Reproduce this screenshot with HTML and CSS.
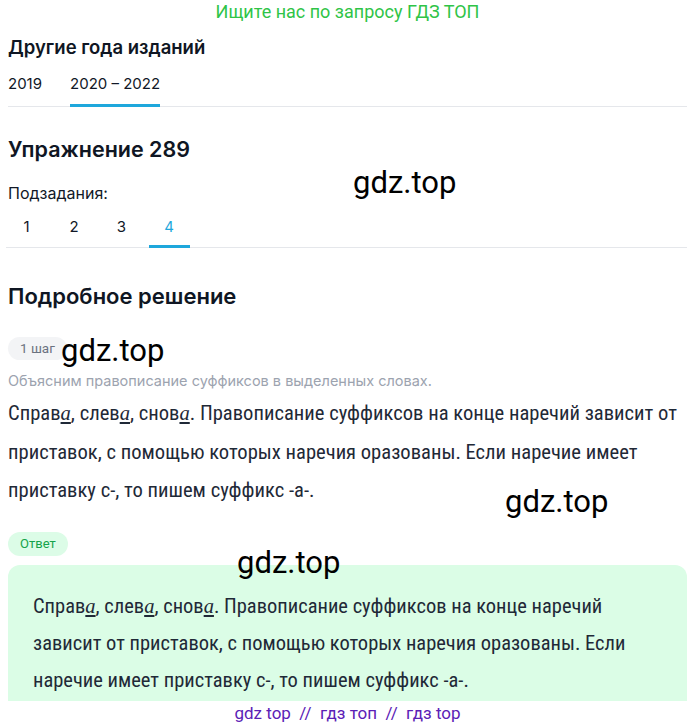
FILE: index.html
```html
<!DOCTYPE html>
<html lang="ru">
<head>
<meta charset="utf-8">
<link rel="stylesheet" href="styles.css">
</head>
<body>
<div class="page">
  <div class="promo">Ищите нас по запросу ГДЗ ТОП</div>
  <h2 class="h-years">Другие года изданий</h2>
  <div class="tabs years">
    <span class="tab">2019</span>
    <span class="tab active">2020 – 2022</span>
  </div>
  <h1 class="h-ex">Упражнение 289</h1>
  <div class="sub-label">Подзадания:</div>
  <div class="tabs subs">
    <span class="tab num">1</span>
    <span class="tab num">2</span>
    <span class="tab num">3</span>
    <span class="tab num active">4</span>
  </div>
  <h2 class="h-sol">Подробное решение</h2>
  <div class="badge step">1 шаг</div>
  <p class="hint">Объясним правописание суффиксов в выделенных словах.</p>
  <p class="text">Справ<u class="ul">а</u>, слев<u class="ul">а</u>, снов<u class="ul">а</u>. Правописание суффиксов на конце наречий зависит от приставок, с помощью которых наречия оразованы. Если наречие имеет приставку с-, то пишем суффикс -а-.</p>
  <div class="badge answer">Ответ</div>
  <div class="answer-box">
    <p class="text ans">Справ<u class="ul">а</u>, слев<u class="ul">а</u>, снов<u class="ul">а</u>. Правописание суффиксов на конце наречий зависит от приставок, с помощью которых наречия оразованы. Если наречие имеет приставку с-, то пишем суффикс -а-.</p>
  </div>
  <div class="footer">gdz top &nbsp;//&nbsp; гдз топ &nbsp;//&nbsp; гдз top</div>

  <span class="wm wm1">gdz.top</span>
  <span class="wm wm2">gdz.top</span>
  <span class="wm wm3">gdz.top</span>
  <span class="wm wm4">gdz.top</span>
</div>
</body>
</html>
```
FILE: styles.css
```css
* { box-sizing: border-box; }
html, body { margin: 0; padding: 0; background: #fff; }
body { font-family: Inter, Roboto, sans-serif; color: #111827; }
.page { position: relative; width: 700px; height: 727px; overflow: hidden; padding: 0 13px 0 8px; }

.promo { text-align: center; color: #2fc447; font-family: Roboto, sans-serif; font-size: 18px; line-height: 24px; margin: 0; }

h1, h2 { margin: 0; font-weight: 600; color: #0f1623; }
.h-years { font-size: 18.5px; line-height: 24px; margin-top: 11px; }
.h-ex { font-size: 21.5px; line-height: 28px; margin-top: 28px; }
.h-sol { font-size: 22px; line-height: 28px; margin-top: 34px; }

.tabs { display: flex; border-bottom: 1px solid #e5e7eb; }
.tab { font-family: Inter, Roboto, sans-serif; font-size: 15px; color: #111827; border-bottom: 3px solid transparent; margin-bottom: -1px; }
.years { margin-top: 8px; }
.years .tab { padding: 7px 0 11px; margin-right: 28px; }
.tab.active { border-bottom-color: #1ea7dc; }
.subs .tab.active { color: #1ea7dc; }
.sub-label { font-size: 16px; margin-top: 19px; line-height: 22px; color: #111827; }
.subs { margin-top: 4px; gap: 6.5px; margin-left: -2px; }
.subs .tab.num { width: 41px; text-align: center; padding: 9px 0 9px; font-size: 15px; }

.badge { display: block; width: fit-content; border-radius: 12px; font-family: Roboto, sans-serif; }
.step { margin-top: 27px; background: #f3f4f6; color: #6b7280; font-size: 13.5px; padding: 4px 12px; line-height: 15px; }
.hint { margin: 11px 0 0; font-family: Inter, Roboto, sans-serif; font-size: 14.5px; color: #9ca3af; line-height: 20px; }
.text { margin: 3px 0 0; font-family: "Liberation Sans Narrow", "Roboto Condensed", Roboto, sans-serif; font-size: 20.6px; line-height: 38.5px; color: #1f2937; }
.ul { font-family: "Liberation Serif", serif; font-style: italic; }
.answer { margin-top: 22px; background: #dcfce7; color: #16a34a; font-size: 13px; padding: 4px 12px; line-height: 16px; }
.answer-box { margin-top: 9px; background: #dbfde6; border-radius: 12px 12px 0 0; padding: 23px 25px 2px; }
.text.ans { margin: 0; font-size: 20.5px; line-height: 37px; }
.footer { text-align: center; color: #5b21b6; font-family: "Liberation Sans Narrow", Roboto, sans-serif; font-size: 17px; line-height: 24px; margin-top: 0; }

.wm { position: absolute; font-family: Roboto, sans-serif; font-size: 31px; color: #000; line-height: 32px; }
.wm1 { left: 353px; top: 167px; }
.wm2 { left: 61px; top: 335px; }
.wm3 { left: 505px; top: 486px; }
.wm4 { left: 237px; top: 547px; }
```
